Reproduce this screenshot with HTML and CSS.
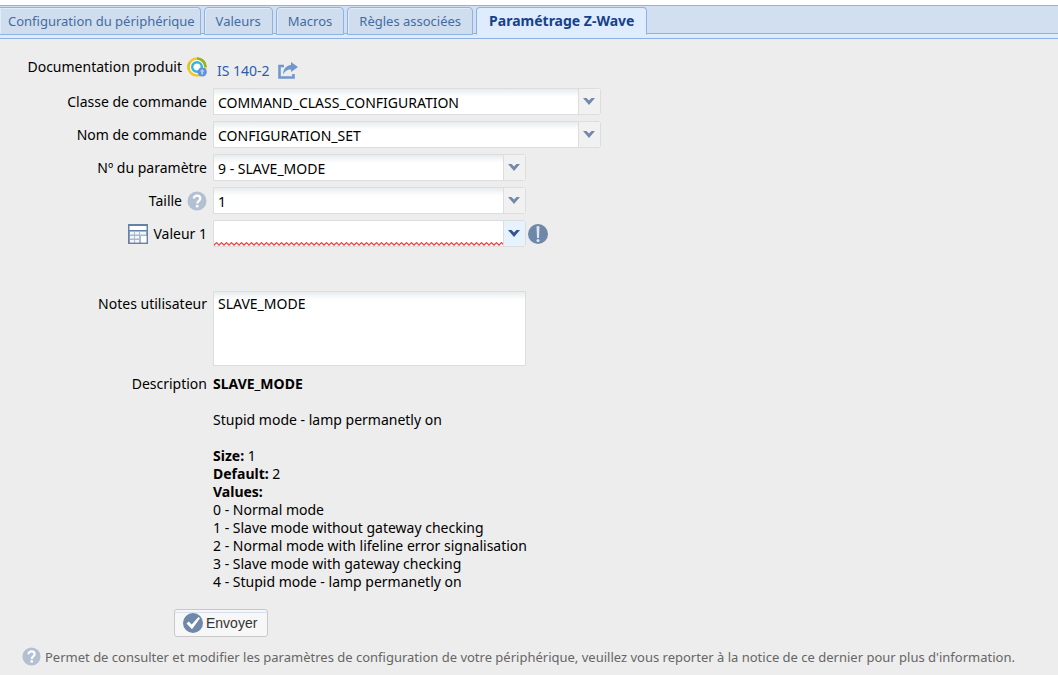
FILE: index.html
```html
<!DOCTYPE html>
<html lang="fr">

<head>
    <meta charset="UTF-8">
    <meta name="viewport" content="width=device-width, initial-scale=1.0">
    <title>Paramétrage Z-Wave</title>
    <link rel="stylesheet" href="styles.css">
</head>

<body>
    <!-- onglets -->
    <nav class="tabs">
        <a class="tab tab-first" href="#configuration">Configuration du périphérique</a>
        <a class="tab" href="#valeurs">Valeurs</a>
        <a class="tab" href="#macros">Macros</a>
        <a class="tab" href="#regles">Règles associées</a>
        <a class="tab active" href="#zwave">Paramétrage Z-Wave</a>
    </nav>

    <form class="form">
        <div class="row doc-row">
            <div class="label">
                <span>Documentation produit</span>
                <svg class="icon" viewBox="0 0 20 20">
                    <circle cx="10" cy="10" r="8.5" fill="#fff" stroke="#f6c62e" stroke-width="2.6" />
                    <path d="M10 1.5a8.5 8.5 0 0 1 8.5 8.5" fill="none" stroke="#8fb52c" stroke-width="2.6" />
                    <path d="M1.8 12.5A8.5 8.5 0 0 1 3 5" fill="none" stroke="#d9c92c" stroke-width="2.6" />
                    <circle cx="10" cy="10" r="4.8" fill="#fff" stroke="#35b4d6" stroke-width="2.4" />
                    <circle cx="15.2" cy="15" r="4.6" fill="#5b92de" />
                    <path d="M15.2 12l2.4 2.600h-1.500v2.800h-1.800v-2.800h-1.500z" fill="#b4d1f6" />
                </svg>
            </div>
            <a class="doc-link" href="#documentation">IS 140-2
                <svg class="icon-share" viewBox="0 0 20 18">
                    <path d="M6 4H1.500v11.500h14V12" fill="none" stroke="#7098cb" stroke-width="2.600" />
                    <path d="M13 0l7 5-7 5V7.500c-4 0-6 1.500-8 5 0-5 3-9 8-9.500z" fill="#7098cb" />
                </svg>
            </a>
        </div>

        <div class="row">
            <label class="label" for="classe">Classe de commande</label>
            <div class="combo combo-large">
                <select id="classe">
                    <option>COMMAND_CLASS_CONFIGURATION</option>
                </select>
                <span class="trigger"><svg viewBox="0 0 12 7"><path d="M0 0h3.500L6 2.500 8.500 0H12L6 7z" /></svg></span>
            </div>
        </div>
        <div class="row">
            <label class="label" for="commande">Nom de commande</label>
            <div class="combo combo-large">
                <select id="commande">
                    <option>CONFIGURATION_SET</option>
                </select>
                <span class="trigger"><svg viewBox="0 0 12 7"><path d="M0 0h3.500L6 2.500 8.500 0H12L6 7z" /></svg></span>
            </div>
        </div>
        <div class="row">
            <label class="label" for="parametre">Nº du paramètre</label>
            <div class="combo">
                <select id="parametre">
                    <option>9 - SLAVE_MODE</option>
                </select>
                <span class="trigger"><svg viewBox="0 0 12 7"><path d="M0 0h3.500L6 2.500 8.500 0H12L6 7z" /></svg></span>
            </div>
        </div>
        <div class="row">
            <label class="label" for="taille">
                <span>Taille</span>
                <svg class="icon" viewBox="0 0 20 20">
                    <circle cx="10" cy="10" r="9.500" fill="#b3c0d4" />
                    <path d="M6.800 7.600C6.800 3.600 13.300 3.700 13.300 7.500c0 2.300-3.100 2.500-3.100 5" fill="none" stroke="#fff" stroke-width="2.200" />
                    <circle cx="10.200" cy="15.200" r="1.400" fill="#fff" />
                </svg>
            </label>
            <div class="combo">
                <select id="taille">
                    <option>1</option>
                </select>
                <span class="trigger"><svg viewBox="0 0 12 7"><path d="M0 0h3.500L6 2.500 8.500 0H12L6 7z" /></svg></span>
            </div>
        </div>
        <div class="row">
            <label class="label" for="valeur">
                <svg class="icon" viewBox="0 0 20 20">
                    <path d="M0 0h20v20H0z" fill="#6681a8" />
                    <path d="M1.500 2h17v4h-17z" fill="#fff" />
                    <path d="M1.500 7h17v11.500h-17z" fill="#a9b9d0" />
                    <path d="M2 8h4v2.500H2zM7 8h4v2.500H7zM12 8h6v2.500h-6zM2 12h4v2.500H2zM7 12h4v2.500H7zM2 16h4v2.500H2zM7 16h4v2.500H7z" fill="#f3f6fa" />
                    <path d="M13 12h5.500v6.500H13z" fill="#fff" />
                </svg>
                <span>Valeur 1</span>
            </label>
            <div class="combo invalid">
                <select id="valeur">
                    <option></option>
                    <option>0</option>
                    <option>1</option>
                    <option>2</option>
                    <option>3</option>
                    <option>4</option>
                </select>
                <!-- ligne rouge ondulée -->
                <svg class="wave">
                    <pattern id="zigzag" width="5" height="4" patternUnits="userSpaceOnUse">
                        <path d="M-1 4.200L2.500 .7 6 4.200" fill="none" stroke="#f33" stroke-width="1.200" />
                    </pattern>
                    <rect width="100%" height="4" fill="url(#zigzag)" />
                </svg>
                <span class="trigger"><svg viewBox="0 0 12 7"><path d="M0 0h3.500L6 2.500 8.500 0H12L6 7z" /></svg></span>
            </div>
            <svg class="icon icon-alert" viewBox="0 0 20 20">
                <circle cx="10" cy="10" r="10" fill="#6f87a9" />
                <path d="M8.500 2.500q1.500-1 3 0L11 14H9z" fill="#dfe5ed" />
                <circle cx="10" cy="16.500" r="1.500" fill="#dfe5ed" />
            </svg>
        </div>

        <div class="row notes-row">
            <label class="label" for="notes">Notes utilisateur</label>
            <textarea class="notes" id="notes">SLAVE_MODE</textarea>
        </div>
        <div class="row desc-row">
            <div class="label">Description</div>
            <div class="description">
                <p><b>SLAVE_MODE</b></p>
                <p>Stupid mode - lamp permanetly on</p>
                <p>
                    <b>Size:</b> 1<br>
                    <b>Default:</b> 2<br>
                    <b>Values:</b><br>
                    0 - Normal mode<br>
                    1 - Slave mode without gateway checking<br>
                    2 - Normal mode with lifeline error signalisation<br>
                    3 - Slave mode with gateway checking<br>
                    4 - Stupid mode - lamp permanetly on
                </p>
            </div>
        </div>

        <button class="send" type="button">
            <svg class="icon" viewBox="0 0 20 20">
                <circle cx="10" cy="10" r="10" fill="#6f87a9" />
                <path d="M3.500 10.500l2.300-2 2.900 3L15.500 4l1.500 1.200-8 11z" fill="#fff" />
            </svg>
            Envoyer
        </button>
    </form>

    <footer class="help">
        <svg class="icon-help" viewBox="0 0 20 20">
            <circle cx="10" cy="10" r="9.500" fill="#b3c0d4" />
            <path d="M6.800 7.600C6.800 3.600 13.300 3.700 13.300 7.500c0 2.300-3.100 2.500-3.100 5" fill="none" stroke="#fff" stroke-width="2.200" />
            <circle cx="10.200" cy="15.200" r="1.400" fill="#fff" />
        </svg>
        <span>Permet de consulter et modifier les paramètres de configuration de votre périphérique, veuillez vous reporter à la notice de ce dernier pour plus d'information.</span>
    </footer>
</body>

</html>
```
FILE: styles.css
```css
* {
    box-sizing: border-box;
    margin: 0;
    padding: 0;
}

body {
    background-color: #ededed;
    color: #000;
    font-family: "Noto Sans", sans-serif;
    font-size: 14px;
    line-height: 18px;
}

svg {
    display: block;
    flex: none;
}

/* onglets */
.tabs {
    display: flex;
    gap: 3px;
    height: 39px;
    padding-top: 1px;
    border-top: 5px solid #fff;
    border-bottom: 1px solid #8db2e3;
    background: linear-gradient(#8db2e3 1px, #d2dff0 1px, #d2dff0 28px, #8db2e3 28px, #8db2e3 29px, #deecfd 29px);
    font-size: 13px;
}

.tab {
    height: 28px;
    margin-top: 1px;
    padding: 4px 11px;
    border: 1px solid #8db2e3;
    border-radius: 4px 4px 0 0;
    background-color: #d0ddef;
    box-shadow: inset 1px 1px #e1ebf8;
    color: #416da3;
    text-decoration: none;
    white-space: nowrap;
}

.tab-first {
    padding-right: 5px;
    padding-left: 8px;
    border-left: none;
    border-top-left-radius: 0;
}

.tab.active {
    padding: 4px 12px;
    border-bottom-color: #deecfd;
    background-color: #deecfd;
    color: #15428b;
    font-size: 14px;
    font-weight: bold;
}

/* formulaire */
.form {
    padding-top: 16px;
}

.row {
    display: flex;
    align-items: center;
    gap: 6px;
    height: 27px;
    margin-bottom: 6px;
}

.label {
    display: flex;
    flex: none;
    align-items: center;
    justify-content: flex-end;
    gap: 5px;
    width: 207px;
}

.icon {
    width: 20px;
    height: 20px;
}

.doc-row {
    align-items: flex-start;
    padding-top: 2px;
}

.doc-link {
    display: flex;
    gap: 8px;
    padding: 5px 4px 0;
    color: #2a5db0;
    text-decoration: none;
}

.icon-share {
    width: 20px;
    height: 18px;
}

.combo {
    position: relative;
    width: 313px;
    height: 27px;
}

.combo-large {
    width: 388px;
}

.combo select {
    width: 100%;
    height: 100%;
    padding: 2px 24px 0 4px;
    appearance: none;
    border: 1px solid #dcdddd;
    border-radius: 0 3px 3px 0;
    background: linear-gradient(#e8ecee, #fff 8px);
    color: #000;
    font: inherit;
}

.trigger {
    position: absolute;
    top: 1px;
    right: 1px;
    bottom: 1px;
    display: flex;
    justify-content: center;
    width: 22px;
    padding-top: 9px;
    padding-right: 2px;
    border-left: 1px solid #dcdddd;
    background-color: #f1f1f1;
    pointer-events: none;
}

.trigger svg {
    width: 12px;
    height: 7px;
    fill: #7389aa;
}

.invalid select {
    background: #fff;
}

.invalid .trigger {
    background-color: #e6f2fe;
}

.invalid .trigger svg {
    fill: #35548c;
}

.wave {
    position: absolute;
    bottom: 1px;
    left: 1px;
    width: calc(100% - 24px);
    height: 4px;
    pointer-events: none;
}

.icon-alert {
    margin-left: -4px;
}

.notes-row,
.desc-row {
    align-items: flex-start;
    height: auto;
}

.notes-row {
    margin-top: 44px;
}

.notes-row .label {
    padding-top: 4px;
}

.notes {
    width: 313px;
    height: 75px;
    padding: 3px 4px;
    border: 1px solid #dcdddd;
    background: linear-gradient(#e8ecee, #fff 8px);
    color: #000;
    font: inherit;
    resize: none;
}

.desc-row {
    margin-top: 9px;
    margin-bottom: 18px;
}

.description p + p {
    margin-top: 18px;
}

.send {
    display: flex;
    align-items: center;
    gap: 3px;
    height: 28px;
    margin-left: 174px;
    padding: 0 10px 0 8px;
    border: 1px solid #c8c8c8;
    border-radius: 3px;
    background-color: #f7f7f7;
    box-shadow: inset 0 2px #f7f7f7, inset 0 3px #d5e1f0;
    color: #333;
    font: 14px "Liberation Sans", sans-serif;
}

/* aide */
.help {
    display: flex;
    align-items: center;
    gap: 4px;
    padding: 10px 22px;
    color: #666;
    font-size: 13px;
    white-space: nowrap;
}

.icon-help {
    width: 19px;
    height: 19px;
}
```
